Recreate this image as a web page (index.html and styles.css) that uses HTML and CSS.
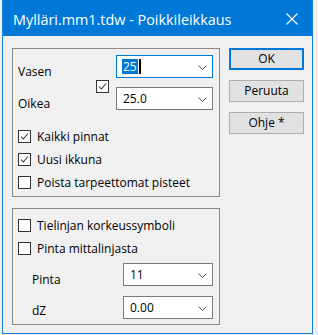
FILE: index.html
```html
<!DOCTYPE html>
<html>
<head>
<meta charset="utf-8">
<link rel="stylesheet" href="styles.css">
</head>
<body>
<div class="window">
  <div class="titlebar">
    <span class="title">Mylläri.mm1.tdw - Poikkileikkaus</span>
    <svg class="close" width="12" height="12" viewBox="0 0 12 12"><path d="M0.5 0.5 L11.5 11.5 M11.5 0.5 L0.5 11.5" stroke="#fff" stroke-width="1.1" fill="none"/></svg>
  </div>
  <div class="content">
    <div class="left">
      <div class="group g1">
        <div class="pair">
          <span class="lbl r1">Vasen</span>
          <span class="box mid"><svg width="11" height="11" viewBox="0 0 11 11"><path d="M2 5.5 L4.3 8 L9 2.5" stroke="#333" stroke-width="1.1" fill="none"/></svg></span>
          <div class="combo focus r1c"><span class="sel">25</span><span class="caret"></span><svg class="chev" width="9" height="5" viewBox="0 0 9 5"><path d="M0.5 0.5 L4.5 4.5 L8.5 0.5" stroke="#555" stroke-width="1" fill="none"/></svg></div>
          <span class="lbl r2">Oikea</span>
          <div class="combo r2c"><span class="val">25.0</span><svg class="chev" width="9" height="5" viewBox="0 0 9 5"><path d="M0.5 0.5 L4.5 4.5 L8.5 0.5" stroke="#555" stroke-width="1" fill="none"/></svg></div>
        </div>
        <div class="checks">
          <div class="chk"><span class="box"><svg width="11" height="11" viewBox="0 0 11 11"><path d="M2 5.5 L4.3 8 L9 2.5" stroke="#333" stroke-width="1.1" fill="none"/></svg></span><span>Kaikki pinnat</span></div>
          <div class="chk"><span class="box"><svg width="11" height="11" viewBox="0 0 11 11"><path d="M2 5.5 L4.3 8 L9 2.5" stroke="#333" stroke-width="1.1" fill="none"/></svg></span><span>Uusi ikkuna</span></div>
          <div class="chk"><span class="box"></span><span>Poista tarpeettomat pisteet</span></div>
        </div>
      </div>
      <div class="group g2">
        <div class="checks">
          <div class="chk"><span class="box"></span><span>Tielinjan korkeussymboli</span></div>
          <div class="chk"><span class="box"></span><span>Pinta mittalinjasta</span></div>
        </div>
        <div class="pair2">
          <span class="lbl2 p1">Pinta</span>
          <div class="combo"><span class="val">11</span><svg class="chev" width="9" height="5" viewBox="0 0 9 5"><path d="M0.5 0.5 L4.5 4.5 L8.5 0.5" stroke="#555" stroke-width="1" fill="none"/></svg></div>
          <span class="lbl2 p2">dZ</span>
          <div class="combo"><span class="val">0.00</span><svg class="chev" width="9" height="5" viewBox="0 0 9 5"><path d="M0.5 0.5 L4.5 4.5 L8.5 0.5" stroke="#555" stroke-width="1" fill="none"/></svg></div>
        </div>
      </div>
    </div>
    <div class="buttons">
      <div class="btn default">OK</div>
      <div class="btn">Peruuta</div>
      <div class="btn">Ohje *</div>
    </div>
  </div>
</div>
</body>
</html>
```
FILE: styles.css
```css
* { box-sizing: border-box; }
html, body { margin: 0; padding: 0; }
body {
  background: #eef0f3;
  width: 318px;
  height: 335px;
  overflow: hidden;
  font-family: "Open Sans", "Noto Sans", sans-serif;
  font-size: 12px;
  color: #000;
}
.window {
  margin-left: 2px;
  width: 311px;
  height: 334px;
  border: 1px solid #1a7fd5;
  border-top: 0;
  background: #f0f0f0;
}
.titlebar {
  height: 36px;
  background: #0078d7;
  display: flex;
  align-items: center;
  justify-content: space-between;
  padding: 3px 14px 0 10px;
}
.title {
  color: #fff;
  font-size: 14.4px;
  line-height: 18px;
}
.close { display: block; margin-top: -2px; }
.content {
  display: flex;
  padding: 12px 0 0 9px;
}
.left { width: 208px; }
.group {
  border: 1px solid #8a8a8a;
}
.g1 { padding: 6px 0 2px 5px; }
.g2 { margin-top: 11px; padding: 5px 0 5px 5px; }
.pair {
  display: grid;
  grid-template-columns: 78px 20px 97px;
  grid-template-rows: 23px 23px;
  row-gap: 9px;
}
.lbl { line-height: 14px; padding-top: 10px; }
.lbl.r1 { grid-column: 1; grid-row: 1; }
.lbl.r2 { grid-column: 1; grid-row: 2; padding-top: 10px; }
.box {
  width: 13px;
  height: 13px;
  border: 1px solid #333;
  background: #fff;
  display: flex;
  align-items: center;
  justify-content: center;
  flex: none;
}
.box svg { display: block; }
.mid { grid-column: 2; grid-row: 1 / 3; margin-top: 25px; justify-self: start; }
.combo {
  height: 23px;
  border: 1px solid #7a7a7a;
  background: #fff;
  display: flex;
  align-items: center;
  padding-left: 5px;
  position: relative;
}
.combo.focus { border-color: #0078d7; }
.r1c { grid-column: 3; grid-row: 1; }
.r2c { grid-column: 3; grid-row: 2; }
.sel {
  background: #0078d7;
  color: #fff;
  line-height: 15px;
  padding: 0 1px;
}
.caret {
  width: 2px;
  height: 15px;
  background: #000;
  margin-left: 1px;
}
.val { line-height: 15px; padding-left: 1px; }
.chev {
  position: absolute;
  right: 5px;
  top: 9px;
}
.checks { display: flex; flex-direction: column; }
.g1 .checks { margin-top: 15px; }
.chk {
  height: 23px;
  display: flex;
  align-items: center;
  gap: 6px;
}
.pair2 {
  display: grid;
  grid-template-columns: 105px 90px;
  grid-template-rows: 23px 23px;
  row-gap: 10px;
  margin-top: 3px;
}
.lbl2 { padding-left: 14px; line-height: 14px; }
.lbl2.p1 { padding-top: 10px; }
.lbl2.p2 { padding-top: 8px; }
.buttons {
  margin-left: 9px;
  display: flex;
  flex-direction: column;
  gap: 10px;
}
.btn {
  width: 75px;
  height: 22px;
  border: 1px solid #adadad;
  background: #e1e1e1;
  display: flex;
  align-items: center;
  justify-content: center;
  line-height: 14px;
}
.btn.default { border: 2px solid #0078d7; }
```
